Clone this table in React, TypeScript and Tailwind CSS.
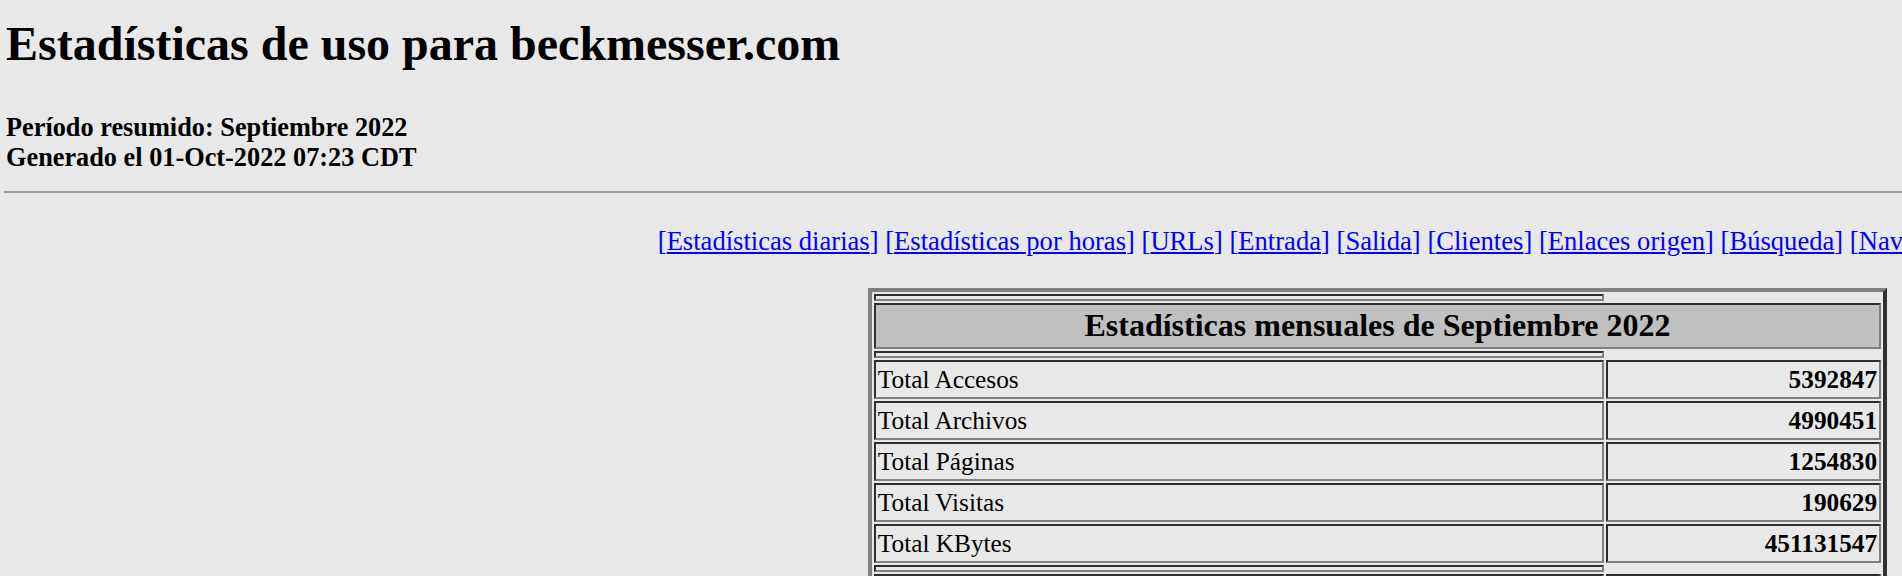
const links = [
  "Estadísticas diarias",
  "Estadísticas por horas",
  "URLs",
  "Entrada",
  "Salida",
  "Clientes",
  "Enlaces origen",
  "Búsqueda",
  "Navegadores",
  "Países",
];

const totals = [
  ["Total Accesos", "5392847"],
  ["Total Archivos", "4990451"],
  ["Total Páginas", "1254830"],
  ["Total Visitas", "190629"],
  ["Total KBytes", "451131547"],
];

// inset cell look of an old-school <table border>
const cell =
  "border-2 border-t-[#2e2e2e] border-l-[#2e2e2e] border-r-[#808080] border-b-[#808080]";

const Spacer = () => (
  <tr>
    <td className={`${cell} p-0`}>
      <div className="h-[3.4px]" />
    </td>
  </tr>
);

export default function App() {
  return (
    <div className="h-[576px] w-full overflow-hidden bg-[#e8e8e8] text-black font-['Liberation_Serif','Times_New_Roman',serif]">
      <div className="w-[2755px] px-[4px]">
        {/* Header */}
        <h2 className="pl-[2px] pt-[16px] text-[48px] leading-[55px] font-bold">
          Estadísticas de uso para beckmesser.com
        </h2>
        <div className="mt-[41.5px] pl-[2px] text-[26.3px] leading-[30.5px] font-bold">
          <div>Período resumido: Septiembre 2022</div>
          <div>Generado el 01-Oct-2022 07:23 CDT</div>
        </div>
        <hr className="mt-[17px] h-[2px] border-0 bg-[#9b9b9b]" />

        {/* Nav */}
        <div className="mt-[33.5px] text-center text-[26.6px] leading-[30px] text-[#0000ff]">
          {links.map((l, i) => (
            <span key={l}>
              {i > 0 && " "}
              <a href="#">
                [<span className="underline">{l}</span>]
              </a>
            </span>
          ))}
        </div>

        {/* Monthly summary */}
        <table className="mx-auto mt-[31.5px] w-[1019.3px] border-separate border-spacing-[2px] border-4 border-t-[#7f7f7f] border-l-[#7f7f7f] border-r-[#303030] border-b-[#303030]">
          <tbody>
            <Spacer />
            <tr>
              <th
                colSpan={2}
                className={`${cell} bg-[#c0c0c0] px-[2px] py-[2px] text-center text-[32px] leading-[37.7px] font-bold`}
              >
                Estadísticas mensuales de Septiembre 2022
              </th>
            </tr>
            <Spacer />
            {totals.map(([label, value]) => (
              <tr key={label}>
                <td className={`${cell} w-[730.3px] px-[2px] py-[2px] text-left text-[25.3px] leading-[30.9px]`}>
                  {label}
                </td>
                <td className={`${cell} px-[2px] py-[2px] text-right text-[25.3px] leading-[30.9px] font-bold`}>
                  {value}
                </td>
              </tr>
            ))}
            <Spacer />
            <tr>
              <td className={`${cell} px-[2px] py-[2px] text-[25.3px] leading-[30.9px]`}>
                Total de Sitios Únicos
              </td>
              <td className={`${cell} px-[2px] py-[2px] text-right text-[25.3px] leading-[30.9px] font-bold`}>
                61542
              </td>
            </tr>
          </tbody>
        </table>
      </div>
    </div>
  );
}
